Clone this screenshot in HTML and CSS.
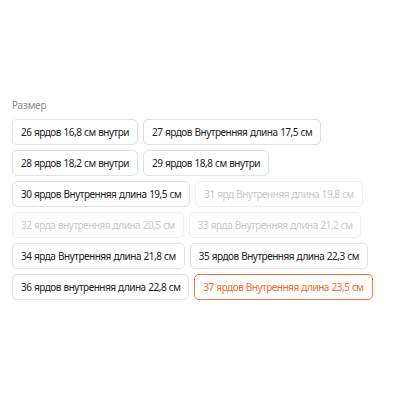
FILE: index.html
```html
<!DOCTYPE html>
<html lang="ru">
<head>
    <meta charset="UTF-8">
    <meta name="viewport" content="width=device-width, initial-scale=1.0">
    <title>Размер</title>
    <link rel="stylesheet" href="styles.css">
</head>
<body>
    <div class="sku-block">
        <div class="sku-title">Размер</div>
        <div class="sku-list">
            <div class="sku-item">26 ярдов 16,8 см внутри</div>
            <div class="sku-item">27 ярдов Внутренняя длина 17,5 см</div>
            <div class="sku-item">28 ярдов 18,2 см внутри</div>
            <div class="sku-item">29 ярдов 18,8 см внутри</div>
            <div class="sku-item">30 ярдов Внутренняя длина 19,5 см</div>
            <div class="sku-item disabled">31 ярд Внутренняя длина 19,8 см</div>
            <div class="sku-item disabled">32 ярда внутренняя длина 20,5 см</div>
            <div class="sku-item disabled">33 ярда Внутренняя длина 21,2 см</div>
            <div class="sku-item">34 ярда Внутренняя длина 21,8 см</div>
            <div class="sku-item">35 ярдов Внутренняя длина 22,3 см</div>
            <div class="sku-item">36 ярдов внутренняя длина 22,8 см</div>
            <div class="sku-item active">37 ярдов Внутренняя длина 23,5 см</div>
        </div>
    </div>
</body>
</html>
```

FILE: styles.css
```css
* {
    margin: 0;
    padding: 0;
    box-sizing: border-box;
}

body {
    font-family: 'Noto Sans', 'Open Sans', sans-serif;
    background: #fff;
    width: 400px;
    height: 400px;
}

.sku-block {
    padding: 97px 12px 0 12px;
}

.sku-title {
    font-size: 10px;
    line-height: 16px;
    letter-spacing: -0.2px;
    color: #8a8a8a;
    margin-bottom: 6px;
}

.sku-list {
    display: flex;
    flex-wrap: wrap;
    gap: 5px 5px;
}

.sku-item {
    height: 26px;
    line-height: 24px;
    padding: 0 8px;
    border: 1px solid #e2e2e2;
    border-radius: 5px;
    font-size: 10px;
    letter-spacing: -0.5px;
    word-spacing: 0.5px;
    color: #222;
    white-space: nowrap;
    cursor: pointer;
}

.sku-item.disabled {
    color: #c8c8c8;
    border-color: #f0f0f0;
}

.sku-item.active {
    color: #f56b2a;
    border-color: #f0763c;
}
```
